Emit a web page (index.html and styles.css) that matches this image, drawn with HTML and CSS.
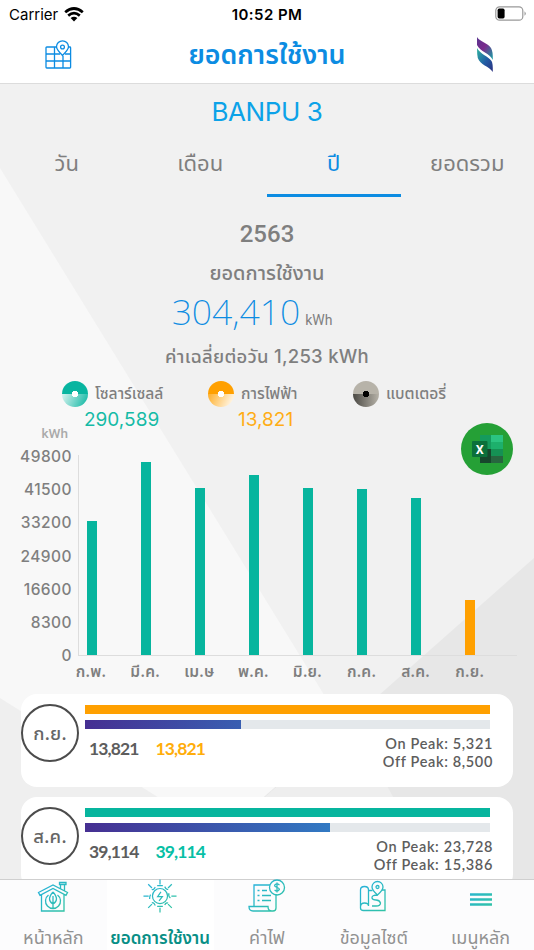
FILE: index.html
```html
<!DOCTYPE html>
<html lang="th">
<head>
<meta charset="utf-8">
<title>ยอดการใช้งาน</title>
<link rel="stylesheet" href="styles.css">
</head>
<body>
<div class="app">
  <div class="status">
    <div class="carrier"><span>Carrier</span>
      <svg width="20" height="15" viewBox="0 0 20 15" fill="none" stroke="#000" stroke-width="2.7"><path d="M1.2 5.3Q10-2.3 18.8 5.3M4.2 8.6Q10 3.7 15.8 8.6"/><path d="M6.6 11.1Q10 8.3 13.4 11.1L10 14.5Z" fill="#000" stroke="none"/></svg>
    </div>
    <div class="clock">10:52 PM</div>
    <svg class="battery" width="32" height="16" viewBox="0 0 32 16"><rect x=".8" y=".8" width="27" height="13.4" rx="3.8" fill="#fff" stroke="#999" stroke-width="1.2"/><rect x="2.6" y="2.6" width="7" height="9.8" rx="1.6"/><path d="M29.5 5.2q2.6 2.3 0 4.6z" fill="#999"/></svg>
  </div>
  <header class="header">
    <svg class="mapicon" width="28" height="30" viewBox="0 0 28 30" fill="none" stroke="#0c8ce2" stroke-width="1.3"><path d="M11 7H1.800q-.8 0-.8.8v19.400q0 .8.8.8h23q.8 0 .8-.8V7.800q0-.8-.8-.8H24M1 14h14M20 14h5.600M1 21h24.600M9.500 7v21M18 16v12"/><path d="M17.500 15.500Q11.500 9.500 11.500 6.800a6 6 0 0 1 12 0Q23.500 9.500 17.500 15.500Z" fill="#fff"/><circle cx="17.500" cy="7" r="1.900"/></svg>
    <h1 class="title">ยอดการใช้งาน</h1>
    <svg class="logo" width="18" height="36" viewBox="0 0 18 36"><defs><linearGradient id="la" x1="0" y1="0" x2="1" y2="1"><stop offset="0" stop-color="#59358f"/><stop offset=".45" stop-color="#7b2a8d"/><stop offset="1" stop-color="#12a5a5"/></linearGradient><linearGradient id="lb" x1="0" y1="0" x2="1" y2="1"><stop offset="0" stop-color="#2fb5a0"/><stop offset=".55" stop-color="#225da5"/><stop offset="1" stop-color="#2b2f7f"/></linearGradient></defs><path fill="url(#la)" d="M1 0C3 4 12 6 15 11Q17 14 16.800 23C14 16 4 15 1 8Z"/><path fill="url(#lb)" d="M1 11C4 17 12 19 15.500 24Q17 26 16.800 35C13 29 4 28 1.800 21Q1 17 1 11Z"/></svg>
  </header>
  <main class="main">
    <svg class="backdrop" width="534" height="796" viewBox="0 84 534 796"><path fill="#f8f8f8" d="M0 168L438 880H0Z"/><path fill="#efefef" d="M0 698L290 880H0Z"/><path fill="#e7e7e7" d="M534 558V880H170Z"/><path fill="#eee" d="M352 721L170 880H438Z"/></svg>
    <div class="content">
      <h2 class="site"><span>BANPU 3</span></h2>
      <nav class="tabs"><a>วัน</a><a>เดือน</a><a class="active">ปี</a><a>ยอดรวม</a></nav>
      <div class="year">2563</div>
      <div class="caption">ยอดการใช้งาน</div>
      <div class="total"><b>304,410</b><small>kWh</small></div>
      <div class="average">ค่าเฉลี่ยต่อวัน 1,253 kWh</div>
      <div class="legend">
        <div class="item solar"><i class="disc"></i><div><span>โซลาร์เซลล์</span><b>290,589</b></div></div>
        <div class="item grid"><i class="disc"></i><div><span>การไฟฟ้า</span><b>13,821</b></div></div>
        <div class="item batt"><i class="disc"></i><div><span>แบตเตอรี่</span></div></div>
      </div>
      <div class="unit">kWh</div>
      <div class="chart">
        <div class="ticks"><span>49800</span><span>41500</span><span>33200</span><span>24900</span><span>16600</span><span>8300</span><span>0</span></div>
        <div class="plot">
          <div class="bars"><i style="height:134px"></i><i style="height:193px"></i><i style="height:167px"></i><i style="height:180.5px"></i><i style="height:167px"></i><i style="height:166.5px"></i><i style="height:157px"></i><i class="o" style="height:55px"></i></div>
          <div class="months"><span>ก.พ.</span><span>มี.ค.</span><span>เม.ษ</span><span>พ.ค.</span><span>มิ.ย.</span><span>ก.ค.</span><span>ส.ค.</span><span>ก.ย.</span></div>
        </div>
      </div>
      <section class="card orange">
        <div class="month">ก.ย.</div>
        <div class="detail"><div class="bar full"></div><div class="bar part"><i style="width:156px"></i></div>
          <div class="figures"><b>13,821</b><b class="accent">13,821</b><p><span>On Peak: 5,321</span><span>Off Peak: 8,500</span></p></div></div>
      </section>
      <section class="card teal">
        <div class="month">ส.ค.</div>
        <div class="detail"><div class="bar full"></div><div class="bar part"><i style="width:245px"></i></div>
          <div class="figures"><b>39,114</b><b class="accent">39,114</b><p><span>On Peak: 23,728</span><span>Off Peak: 15,386</span></p></div></div>
      </section>
    </div>
    <svg class="excel" width="52" height="52" viewBox="0 0 52 52"><circle cx="26" cy="26" r="26" fill="#25a036"/><path fill="#159b5d" d="M19 12h11v14H19z"/><path fill="#2bc481" d="M30 12h12v7H30z"/><path fill="#1db06c" d="M30 19h12v7H30z"/><path fill="#17472c" d="M19 26h11v14H19z"/><path fill="#159154" d="M30 26h12v7H30z"/><path fill="#27663f" d="M30 33h12v7H30z"/><rect x="11" y="18" width="15.500" height="16" rx="1" fill="#0b703b"/><text x="18.700" y="30.500" text-anchor="middle" font-family="Roboto" font-weight="700" font-size="12.500" fill="#fff">X</text></svg>
  </main>
  <nav class="tabbar">
    <a><svg width="34" height="34" viewBox="0 0 34 34"><defs><linearGradient id="g" gradientUnits="userSpaceOnUse" x1="0" y1="0" x2="34" y2="34"><stop offset="0" stop-color="#25aee5"/><stop offset="1" stop-color="#32c69b"/></linearGradient></defs><path d="M5.500 14v17H28V14M2.500 12.500L17 5l14.500 7.500-1.500 2.800L17 8.500 4 15.300ZM24.500 8.500V4.500h4v6.200M23.500 2.500h6.500v2h-6.500z"/><path d="M12.500 15a7.500 7.500 0 1 0 9 0M17 12q-7 8 0 12 7-4 0-12M17 16v12"/></svg><span>หน้าหลัก</span></a>
    <a class="on"><svg width="38" height="36" viewBox="0 1 38 36"><circle cx="19" cy="18" r="8"/><path d="M20 13.500L16.500 18.500h5L18 23"/><path d="M19 .5v5.200M19 30.500v5M1.500 18h5.500M31 18h5.500M6.500 5.500l4 4M31.500 5.500l-4 4M6.500 30.500l4-4M31.500 30.500l-4-4M8 21q0-3 1-4.500M10.500 10.500q1 2 3.500-2M16 7h6M24 8q2 4 3.500 2.500M28.500 15q-1 3 1.500 5M27.500 25.500q-2-1-3.500 2M16 29h6M14 28q-2-4-3.500-2.500"/></svg><span>ยอดการใช้งาน</span></a>
    <a><svg width="38" height="34" viewBox="0 0 38 34"><path d="M6 26V5h16M28 14v14q0 3-3 3H5q-4 0-4-4.500h19q0 4.500 4 4.500M9.500 10.500h2M14 10.500h5M9.500 15.500h2M14 15.500h9M9.500 20.500h2M14 20.500h9"/><circle cx="29" cy="7.500" r="7.500"/><path d="M31.500 5q-2.500-2-4.500-.3c-2 3 5 2 4.300 5q-2 2.500-4.700.3M29 2.500v10"/></svg><span>ค่าไฟ</span></a>
    <a><svg width="34" height="34" viewBox="1 0 34 34"><path d="M4.500 27V10q0-3.500 4-3.500t4 3.500v16q0-3-4-3t-4 4v1q0 2.500 3 2.500H29V10h-3M12.500 10.500h4"/><path d="M21.500 15q-5.500-5-5.500-8a5.500 5.500 0 0 1 11 0q0 3-5.500 8ZM21.500 15q-6 0-5.500 3 .5 2 4 2t4.500 3q0 3-4.500 3h-4"/><circle cx="21.500" cy="7" r="1.500"/></svg><span>ข้อมูลไซต์</span></a>
    <a><svg width="34" height="34" viewBox="0 3 34 34"><g stroke-width="2.300"><path d="M6 17.500l22 .01M6 22.500l22 .01M6 27.500l22 .01"/></g></svg><span>เมนูหลัก</span></a>
  </nav>
</div>
</body>
</html>
```
FILE: styles.css
```css
* { box-sizing: border-box; margin: 0; padding: 0; }
body { width: 534px; height: 950px; overflow: hidden; background: #fff; font-family: Inter, "Noto Sans Thai", "Loma", sans-serif; color: #7f7f7f; }
.app { display: flex; flex-direction: column; height: 950px; }
.status { height: 28px; flex: none; display: grid; grid-template-columns: 1fr 1fr 1fr; align-items: center; padding: 0 6px 0 9px; color: #000; }
.carrier { display: flex; align-items: center; gap: 6px; font-size: 15px; letter-spacing: 0; }
.clock { text-align: center; font-size: 15px; font-weight: 600; letter-spacing: .45px; white-space: nowrap; margin-left: -3px; }
.battery { justify-self: end; margin-right: 1px; }
.header { height: 56px; flex: none; display: grid; grid-template-columns: 1fr 220px 1fr; align-items: center; border-bottom: 1.5px solid #dcdcdc; }
.mapicon { margin-left: 45px; margin-top: -1px; }
.title { text-align: center; font-size: 26.8px; font-weight: 600; color: #0c8ce2; white-space: nowrap; line-height: 50px; margin-top: -4px; }
.logo { justify-self: end; margin-right: 40px; margin-top: -2px; }
.main { display: grid; flex: none; height: 795px; overflow: hidden; background: #f1f1f1; position: relative; }
.backdrop { grid-area: 1 / 1; }
.content { grid-area: 1 / 1; z-index: 1; min-width: 0; display: flex; flex-direction: column; }
.site { height: 56px; line-height: 56px; text-align: center; font-size: 26px; font-weight: 400; letter-spacing: -.4px; color: #0ca2e8; }
.tabs { display: grid; grid-template-columns: repeat(4, 1fr); height: 57px; text-align: center; font-size: 22px; line-height: 46px; }
.tabs .active { color: #0c8ce2; border-bottom: 3px solid #0c8ce2; }
.year { height: 75px; text-align: center; font: 500 24px/75px Roboto, sans-serif; }
.caption { height: 22px; margin-top: -10px; line-height: 22px; text-align: center; font-size: 20px; font-weight: 500; }
.total { height: 54px; display: flex; justify-content: center; align-items: baseline; gap: 5px; margin-left: -30px; line-height: 54px; }
.total b { font: 200 35.500px/54px "Noto Sans", sans-serif; color: #0c8ce2; }
.total small { font: 400 14px/54px Roboto, sans-serif; }
.average { height: 36px; line-height: 36px; text-align: center; font-size: 18.500px; font-weight: 500; letter-spacing: .25px; white-space: nowrap; }
.legend { display: grid; grid-template-columns: 146px 145px 1fr; height: 53px; padding: 7px 0 0 62px; }
.item { display: flex; gap: 7px; }
.item span, .item b { display: block; white-space: nowrap; }
.item span { font-size: 15.600px; line-height: 26px; font-weight: 500; }
.item b { font-weight: 400; font-size: 19px; line-height: 26px; margin-left: -11px; }
.disc { width: 26px; height: 26px; flex: none; border-radius: 50%; }
.solar .disc { background: radial-gradient(circle, #fff 0 3px, transparent 3.5px), linear-gradient(#08b5a0 0 13px, transparent 13px), linear-gradient(115deg, #fff, #08b5a0); }
.grid .disc { background: radial-gradient(circle, #fff 0 3px, transparent 3.5px), linear-gradient(#ffa000 0 13px, transparent 13px), linear-gradient(295deg, #fff, #ffa000); }
.batt .disc { background: radial-gradient(circle, #000 0 3px, transparent 3.5px), linear-gradient(#b7b3a9 0 13px, transparent 13px), linear-gradient(90deg, #4b4944, #b7b3a9); }
.solar b { color: #15bba6; }
.grid b { color: #ffad16; margin-left: -3px; }
.unit { height: 16px; margin-top: -2px; line-height: 16px; width: 68px; text-align: right; font: 500 13.500px/16px Roboto, sans-serif; color: #aaa; }
.chart { display: flex; height: 253px; }
.ticks { width: 72px; flex: none; display: flex; flex-direction: column; text-align: right; font-size: 15.500px; font-weight: 500; letter-spacing: .45px; margin-top: -1px; }
.ticks span { height: 33.2px; line-height: 34px; flex: none; }
.plot { margin: 14px 17px 0 6px; flex: 1; }
.bars { display: grid; grid-template-columns: repeat(8, 54.1px); align-items: end; height: 201px; border-left: 1.5px solid #ddd; border-bottom: 1.5px solid #ddd; }
.bars i { width: 10px; margin-left: 7.700px; background: #07b59e; }
.bars .o { background: #ffa000; }
.months { display: grid; grid-template-columns: repeat(8, 54.1px); margin-left: -14px; text-align: center; font-size: 15.500px; font-weight: 600; line-height: 32px; }
.card { flex: none; width: 492px; height: 93px; margin: 0 0 10px 21px; background: #fff; border-radius: 16px; display: flex; gap: 6px; padding-top: 10px; }
.month { width: 58px; height: 58px; flex: none; border: 2.5px solid #4c4c4c; border-radius: 50%; text-align: center; font-size: 18.500px; line-height: 55px; font-weight: 500; color: #666; }
.detail { width: 408px; padding-top: .5px; }
.bar { width: 405px; height: 9px; margin-bottom: 6.500px; background: #e4e8eb; }
.orange .full { background: #ffa000; }
.teal .full { background: #07b59e; }
.bar i { display: block; height: 9px; background: linear-gradient(90deg, #462f92, #317bc4) 0 0 / 250px 9px; }
.figures { display: flex; padding-left: 4px; gap: 17px; color: #5d5d5d; }
.figures b { font: 700 17.500px/26px Lato, sans-serif; letter-spacing: -.9px; }
.figures .accent { color: #ffad0a; }
.teal .accent { color: #07bfa5; }
.figures p { margin-left: auto; margin-top: -1px; text-align: right; font: 600 14.500px/18px Lato, sans-serif; letter-spacing: .65px; }
.figures p span { display: block; }
.tabbar { flex: none; height: 71px; display: grid; grid-template-columns: repeat(5, 1fr); border-top: 1px solid #cfcfcf; background: #fcfcfd; }
.tabbar a { display: flex; flex-direction: column; align-items: center; height: 70px; font-size: 18px; color: #929292; white-space: nowrap; }
.tabbar svg { height: 34px; overflow: visible; flex: none; fill: none; stroke: url(#g); stroke-width: 1.3; }
.tabbar span { line-height: 48px; height: 36px; }
.tabbar .on { background: #fff; color: #088f86; font-size: 17px; font-weight: 600; }
.excel { position: absolute; left: 461px; top: 339px; z-index: 2; }
```
